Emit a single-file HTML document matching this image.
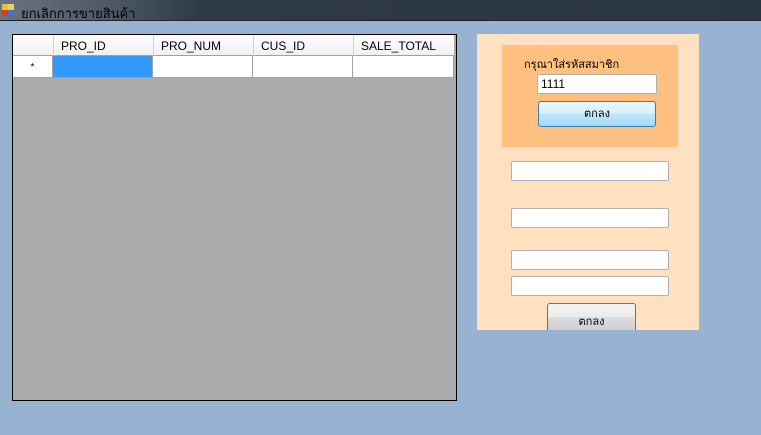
<!DOCTYPE html>
<html><head><meta charset="utf-8"><style>
body{margin:0;width:761px;height:435px;background:#98b3d2;position:relative;overflow:hidden;font-family:"Liberation Sans","Noto Sans CJK SC",sans-serif;font-size:12px}
.a{position:absolute;box-sizing:border-box}
.tb{background:#fff;border:1px solid #b0b0b0;border-radius:2px}
</style></head><body>
<div class="a" style="left:0;top:0;width:761px;height:21px;background:linear-gradient(90deg,#6a7480 0,#4a5564 120px,#2f3a48 200px,#2a3542 100%);border-bottom:1px solid #1a2230"></div>
<div class="a" style="left:2px;top:4px;width:6px;height:6px;background:#e8c040"></div>
<div class="a" style="left:8px;top:4px;width:6px;height:6px;background:#f0d060"></div>
<div class="a" style="left:2px;top:10px;width:6px;height:6px;background:#d04020"></div>
<div class="a" style="left:8px;top:10px;width:6px;height:6px;background:#4070d0"></div>
<div class="a" style="left:21px;top:3px;color:#000;font-size:13px">ยกเลิกการขายสินค้า</div>

<div class="a" style="left:12px;top:34px;width:445px;height:367px;background:#ababab;border:1px solid #000"></div>
<div class="a" style="left:13px;top:35px;width:441px;height:21px;background:linear-gradient(#fff,#f0f0f0);border-bottom:1px solid #a0a0a0"></div>
<div class="a" style="left:13px;top:56px;width:40px;height:22px;background:#fff;border-right:1px solid #a0a0a0;border-bottom:1px solid #a0a0a0;text-align:center;line-height:24px;font-size:10px">*</div>
<div class="a" style="left:53px;top:56px;width:100px;height:22px;background:#3399ff;border-right:1px solid #a0a0a0;border-bottom:1px solid #a0a0a0"></div>
<div class="a" style="left:153px;top:56px;width:100px;height:22px;background:#fff;border-right:1px solid #a0a0a0;border-bottom:1px solid #a0a0a0"></div>
<div class="a" style="left:253px;top:56px;width:100px;height:22px;background:#fff;border-right:1px solid #a0a0a0;border-bottom:1px solid #a0a0a0"></div>
<div class="a" style="left:353px;top:56px;width:101px;height:22px;background:#fff;border-right:1px solid #a0a0a0;border-bottom:1px solid #a0a0a0"></div>
<div class="a" style="left:53px;top:35px;width:1px;height:21px;background:#d0d0d0"></div>
<div class="a" style="left:153px;top:35px;width:1px;height:21px;background:#d0d0d0"></div>
<div class="a" style="left:253px;top:35px;width:1px;height:21px;background:#d0d0d0"></div>
<div class="a" style="left:353px;top:35px;width:1px;height:21px;background:#d0d0d0"></div>
<div class="a" style="left:61px;top:39px">PRO_ID</div>
<div class="a" style="left:161px;top:39px">PRO_NUM</div>
<div class="a" style="left:261px;top:39px">CUS_ID</div>
<div class="a" style="left:361px;top:39px">SALE_TOTAL</div>

<div class="a" style="left:477px;top:34px;width:222px;height:296px;background:#ffe0c0"></div>
<div class="a" style="left:502px;top:45px;width:176px;height:102px;background:#ffc080"></div>
<div class="a" style="left:524px;top:55px;font-size:11px">กรุณาใส่รหัสสมาชิก</div>
<div class="a tb" style="left:537px;top:74px;width:120px;height:20px;padding:2px 3px;font-size:12px">1111</div>
<div class="a" style="left:538px;top:101px;width:118px;height:26px;border:1px solid #3c7fb1;border-radius:3px;background:linear-gradient(#eaf6fd 0,#d9f0fc 45%,#bee6fd 50%,#a7d9f5 100%);text-align:center;line-height:24px;font-size:11px">ตกลง</div>
<div class="a tb" style="left:511px;top:161px;width:158px;height:20px"></div>
<div class="a tb" style="left:511px;top:208px;width:158px;height:20px"></div>
<div class="a tb" style="left:511px;top:250px;width:158px;height:20px"></div>
<div class="a tb" style="left:511px;top:276px;width:158px;height:20px"></div>
<div class="a" style="left:547px;top:303px;width:89px;height:27px;border:1px solid #707070;border-bottom:none;border-radius:3px 3px 0 0;background:linear-gradient(#f2f2f2 0,#ebebeb 50%,#dddddd 51%,#cfcfcf 100%);text-align:center;line-height:36px;font-size:11px">ตกลง</div>
</body></html>
